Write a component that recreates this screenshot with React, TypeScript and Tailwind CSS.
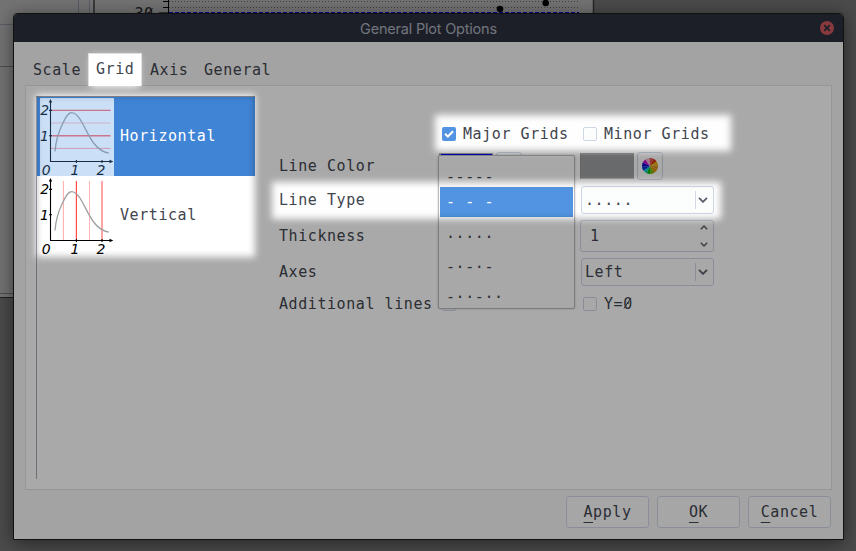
import React from "react";

const MONO = "font-['DejaVu_Sans_Mono',monospace] text-[15px] tracking-[0.57px] leading-[20px] text-[#41454e]";

/* Zero with a full diagonal slash, as terminal typefaces draw it. */
function Zero() {
  return (
    <span className="relative inline-block">
      0
      <svg className="absolute top-[3px] left-0" width="9" height="12" viewBox="0 0 9 12">
        <path d="M1 11.400L8 .8" stroke="currentColor" strokeWidth="1" />
      </svg>
    </span>
  );
}

function Chevron({ up = false, small = false }: { up?: boolean; small?: boolean }) {
  return (
    <svg width={small ? 8 : 10} height={small ? 5 : 6} viewBox="0 0 10 6" className={up ? "rotate-180" : ""}>
      <path d="M1 .8 L5 4.8 L9 .8" fill="none" stroke="#5c616c" strokeWidth="1.9" />
    </svg>
  );
}

function PlotIcon({ kind }: { kind: "h" | "v" }) {
  return (
    <svg width="74" height="78" viewBox="0 0 74 78" className="shrink-0">
      <rect width="74" height="78" fill="#fff" />
      {kind === "h" ? (
        <g stroke="#ff2a2a">
          <path d="M11 12.4H70.5" strokeOpacity=".72" strokeWidth="1.2" />
          <path d="M11 25H70.5" strokeOpacity=".3" />
          <path d="M11 37.7H70.5" strokeOpacity=".7" strokeWidth="1.4" />
          <path d="M11 50.4H70.5" strokeOpacity=".45" />
        </g>
      ) : (
        <g stroke="#ff2a2a">
          <path d="M23.4 4V63" strokeOpacity=".4" />
          <path d="M36.4 4V63" strokeOpacity=".85" strokeWidth="1.2" />
          <path d="M49.5 4V63" strokeOpacity=".35" />
          <path d="M62 4V63" strokeOpacity=".45" strokeWidth="1.9" />
        </g>
      )}
      <path
        d="M15 53.5C15.8 42 19 33 22.5 26C25.5 19.500 28 14.700 31.700 14.700C36.500 14.700 39.500 20 42 24.500C46 31.500 49 39 54 45.500C58.500 51.500 63 54 68.800 55.200"
        fill="none"
        stroke="#a0a0a0"
        strokeWidth="1.300"
      />
      <g stroke="#000" fill="none" strokeWidth="1.1">
        <path d="M10.500 3V63.500H71" />
        <path d="M9 12.400H12M9 37.700H12M36.400 62V65M62 62V65" />
      </g>
      <path d="M10.500 1L8.800 4.500H12.200ZM73.300 63.500L69.500 61.800V65.200Z" fill="#000" />
      <g className="font-['DejaVu_Sans',sans-serif] text-[14px] italic tracking-normal" fill="#000">
        <text x="0.3" y="17">2</text>
        <text x="0" y="42.500">1</text>
        <text x="1.700" y="76.500">0</text>
        <text x="30.500" y="76.500">1</text>
        <text x="56.500" y="76.500">2</text>
      </g>
      {kind === "h" && <rect width="74" height="78" fill="#5294e2" fillOpacity=".3" />}
    </svg>
  );
}

function Check({ checked = false }: { checked?: boolean }) {
  return (
    <span
      className={
        checked
          ? "flex size-3.5 shrink-0 items-center justify-center rounded-[2px] bg-[#5294e2]"
          : "size-3.5 shrink-0 rounded-[2px] border border-[#cfd6e6] bg-[#fcfdfd]"
      }
    >
      {checked && (
        <svg width="10" height="8" viewBox="0 0 10 8">
          <path d="M1 3.800L3.900 6.500L9 1.200" fill="none" stroke="#fff" strokeWidth="2" />
        </svg>
      )}
    </span>
  );
}

function CheckField({ checked, children }: { checked?: boolean; children: React.ReactNode }) {
  return (
    <label className="flex items-center gap-[7px] pl-[3px]">
      <Check checked={checked} />
      <span className="pb-px whitespace-pre">{children}</span>
    </label>
  );
}

const WHEEL = [
  "#e05050", "#d03008", "#e8b010", "#d89018", "#e08a10", "#80b000",
  "#08b808", "#10c8c8", "#0030d0", "#0808c8", "#c808c8", "#f0b0d0",
];

function ColorField({ blue = false }: { blue?: boolean }) {
  return (
    <div className="flex items-center gap-[3px]">
      <span
        className={
          blue
            ? "h-[26px] w-[54px] border border-[#aaa] border-l-2 bg-[#0000ff]"
            : "h-[26px] w-[54px] border border-t-2 border-r-0 border-[#c8c8c8] border-t-[#aaa] border-l-[#969696] bg-[#9e9fa1]"
        }
      />
      <span className="flex h-7 w-[26px] items-center justify-center rounded-[3px] border border-[#cfd6e6]">
        <svg width="16" height="16" viewBox="-8 -8 16 16">
          {WHEEL.map((c, i) => (
            <path key={c} d="M0 0L-2.070 -7.720A8 8 0 0 1 2.070 -7.720Z" fill={c} transform={`rotate(${i * 30 + 10})`} />
          ))}
        </svg>
      </span>
    </div>
  );
}

function Combo({ children }: { children: React.ReactNode }) {
  return (
    <div className="ml-px flex h-7 w-[133px] items-center rounded-[3px] border border-[#cfd6e6] bg-[#fcfdfd] pl-[3px]">
      <span className="flex-1">{children}</span>
      <span className="flex h-[18px] items-center border-l border-[#d3d8e2] pr-[5px] pl-[2px]">
        <Chevron />
      </span>
    </div>
  );
}

function Popup() {
  return (
    <div className="absolute top-[155px] left-[438px] flex h-[154px] w-[137px] flex-col rounded-[2px] border border-[#b9bbc1] bg-[#fdfdfd] p-px shadow-[0_0_2px_rgba(0,0,0,0.25)]">
      <span className="h-[30px] pt-[10px] pl-[6px]">-----</span>
      <span className="h-[30px] bg-[#5294e2] pt-[5px] pl-[6px] text-white">- - -</span>
      <span className="h-[30px] pt-[10px] pl-[6px]">·····</span>
      <span className="h-[30px] pt-[10px] pl-[6px]">-·-·-</span>
      <span className="h-[30px] pt-[10px] pl-[6px]">-··-··</span>
    </div>
  );
}

function Backdrop() {
  return (
    <svg className="absolute inset-0" width="856" height="551" viewBox="0 0 856 551">
      <rect width="856" height="551" fill="#717171" />
      <rect width="593" height="297" fill="#adadad" />
      <path d="M0 24.500H78.500V0M89.500 0V13" fill="none" stroke="#858b97" />
      <path d="M0 66.500H14M0 293.500H14" stroke="#777" />
      <path d="M0 297.500H14" stroke="#333" />
      <path d="M94 0V14M593.500 0V14" stroke="#3b3b3b" strokeWidth="1.500" />
      <path d="M169 1.500H580M169 7.500H580" stroke="#626262" strokeDasharray="1 2" />
      <path d="M169 12.500H579" stroke="#0000e0" strokeDasharray="4 2" />
      <path d="M168.500 0V13M163 1.500H168M163 7.500H168M159 13H168" stroke="#000" fill="none" />
      <circle cx="500" cy="9" r="3.300" />
      <circle cx="545.700" cy="3" r="3.300" />
      <text x="134.500" y="19" fill="#222">30</text>
      <path d="M145 19L152.500 8" stroke="#222" />
    </svg>
  );
}

/* Dims the screen and leaves soft-edged spotlights over the steps of the guide. */
function Spotlights() {
  return (
    <svg className="pointer-events-none absolute inset-0" width="856" height="551" viewBox="0 0 856 551">
      <defs>
        <filter id="soft" x="-20%" y="-20%" width="140%" height="140%" colorInterpolationFilters="sRGB">
          <feGaussianBlur stdDeviation="3.500" />
        </filter>
        <mask id="holes" maskUnits="userSpaceOnUse" x="0" y="0" width="856" height="551">
          <rect width="856" height="551" fill="#fff" />
          <g fill="#000">
            <rect x="91" y="56" width="48" height="31" filter="url(#soft)" />
            <rect x="36" y="95" width="219" height="162" filter="url(#soft)" />
            <rect x="435" y="115" width="296" height="36" filter="url(#soft)" />
            <rect x="272" y="182" width="449" height="37" filter="url(#soft)" />
          </g>
        </mask>
      </defs>
      <rect width="856" height="551" fill="#000" fillOpacity=".333" mask="url(#holes)" />
    </svg>
  );
}

export default function App() {
  const button = "flex h-8 w-[83px] items-center justify-center rounded-[3px] border border-[#cfd6e6] bg-[#fafafb]";
  const hot = "underline decoration-1 underline-offset-[5px]";
  return (
    <div className={`relative h-[551px] w-[856px] overflow-hidden ${MONO}`}>
      <Backdrop />
      <div className="absolute top-[13px] left-[13px] flex h-[527px] w-[831px] flex-col rounded-t-[4px] border border-[#1a1a1a] bg-[#f5f5f5] shadow-[0_3px_18px_rgba(0,0,0,0.5)]">
        <header className="flex h-7 shrink-0 items-center rounded-t-[3px] bg-[#2c2f3c] pr-[9px] pl-[23px]">
          <span className="flex-1 pt-px text-center font-['Inter',sans-serif] text-[14.5px] tracking-[-0.2px] text-[#a9b0bd]">General Plot Options</span>
          <span className="flex size-3.5 items-center justify-center rounded-full bg-[#cc575d]">
            <svg width="8" height="8" viewBox="0 0 8 8">
              <path d="M1.200 1.200L6.800 6.800M6.800 1.200L1.200 6.800" stroke="#2c2f3c" strokeWidth="1.800" />
            </svg>
          </span>
        </header>

        <nav className="flex h-11 shrink-0 items-end pl-[11px]">
          <span className="w-[63px] pb-[6px] pl-2">Scale</span>
          <span className="z-10 h-[33px] w-[54px] border border-b-0 border-[#dcdfe3] bg-white pt-[5px] pl-[7px]">Grid</span>
          <span className="w-[54px] pb-[6px] pl-2">Axis</span>
          <span className="pb-[6px] pl-2">General</span>
        </nav>

        <main className="-mt-px ml-[11px] flex h-[405px] w-[807px] shrink-0 border border-[#dfe1e4] bg-[#fefefe] pt-[10px] pl-[10px]">
          <div className="flex h-[383px] w-[219px] flex-col border-t border-l border-t-[#8c9097] border-l-[#a4a9b2]">
            <div className="flex h-[79px] items-center gap-[6px] bg-[#4084d6] pl-[3px] text-white">
              <PlotIcon kind="h" />
              <span className="pb-0.5">Horizontal</span>
            </div>
            <div className="flex h-[79px] items-center gap-[6px] bg-white pl-[3px]">
              <PlotIcon kind="v" />
              <span className="pb-0.5">Vertical</span>
            </div>
          </div>

          <div className="mt-[26px] ml-6 grid h-fit grid-cols-[160px_141px_134px] grid-rows-[24px_28px_28px_32px_28px_24px] items-center gap-y-1.5">
            <span />
            <CheckField checked>Major Grids</CheckField>
            <CheckField>Minor Grids</CheckField>

            <span>Line Color</span>
            <ColorField blue />
            <ColorField />

            <span>Line Type</span>
            <span />
            <Combo>.....</Combo>

            <span>Thickness</span>
            <span />
            <div className="flex h-8 items-center rounded-[3px] border border-[#cfd6e6] bg-[#fcfdfd] pl-[9px]">
              <span className="flex-1">1</span>
              <span className="flex h-full w-[18px] flex-col items-center justify-between pt-1 pb-1">
                <Chevron up small />
                <Chevron small />
              </span>
            </div>

            <span>Axes</span>
            <span />
            <Combo>Left</Combo>

            <span className="whitespace-nowrap">Additional lines</span>
            <CheckField>X=<Zero /></CheckField>
            <CheckField>Y=<Zero /></CheckField>
          </div>
        </main>

        <footer className="mt-[6px] flex justify-end gap-2 pr-3">
          <div className={button}><span><span className={hot}>A</span>pply</span></div>
          <div className={button}><span><span className={hot}>O</span>K</span></div>
          <div className={button}><span><span className={hot}>C</span>ancel</span></div>
        </footer>
      </div>
      <Popup />
      <Spotlights />
    </div>
  );
}
